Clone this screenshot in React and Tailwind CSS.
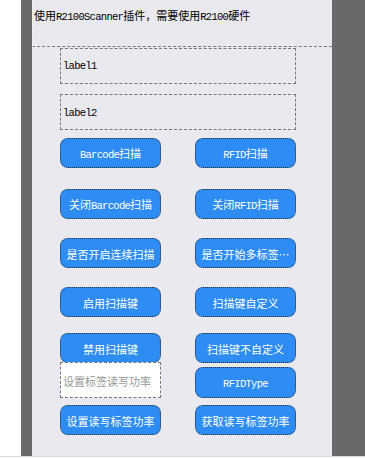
import React from "react";

function T({ text }) {
  const parts = text.match(/[\x20-\x7e]+|[^\x20-\x7e]+/g) || [];
  return (
    <span className="whitespace-nowrap">
      {parts.map((p, i) =>
        /^[\x20-\x7e]+$/.test(p) ? (
          <span key={i} className="font-['Liberation_Mono',monospace] text-[10.5px] tracking-[-0.7px]">
            {p}
          </span>
        ) : (
          <span key={i} className="font-['Noto_Sans_CJK_SC',sans-serif] text-[11px]">
            {p}
          </span>
        )
      )}
    </span>
  );
}

function Btn({ label, extra = "h-[30px]" }) {
  return (
    <div
      className={`w-[101px] ${extra} rounded-[8px] border border-dotted border-[#2a2f3a] bg-[#2d8cf5] text-white flex items-center justify-center overflow-hidden whitespace-nowrap leading-[14px]`}
    >
      <T text={label} />
    </div>
  );
}

function Row({ left, right, className }) {
  return (
    <div className={`flex gap-[34px] ${className}`}>
      <Btn label={left} />
      <Btn label={right} />
    </div>
  );
}

export default function App() {
  return (
    <div className="w-[365px] h-[458px] bg-white">
      <div className="flex h-[457px] border-b border-[#dcdcdc]">
        <div className="w-[21px] bg-white" />
        <div className="w-[11px] bg-[#696969]" />
        <div className="w-[300px] bg-[#eae9f0] flex flex-col">
          <div className="h-[47px] border-b border-l border-dashed border-b-[#7a7a7a] border-l-[#f4f4f4] pt-[7px] pl-[1px] text-black leading-[14px] whitespace-nowrap">
            <T text="使用R2100Scanner插件，需要使用R2100硬件" />
          </div>
          <div className="ml-[28px] mt-[1px] w-[236px] h-[36px] border border-dashed border-[#777] flex items-center pl-[2px] pb-[4px] text-black leading-[14px]">
            <T text="label1" />
          </div>
          <div className="ml-[28px] mt-[10px] w-[236px] h-[36px] border border-dashed border-[#777] flex items-center pl-[2px] pb-[2px] text-black leading-[14px]">
            <T text="label2" />
          </div>
          <div className="ml-[28px] flex flex-col">
            <Row left="Barcode扫描" right="RFID扫描" className="mt-[8px]" />
            <Row left="关闭Barcode扫描" right="关闭RFID扫描" className="mt-[21px]" />
            <Row left="是否开启连续扫描" right="是否开始多标签…" className="mt-[19px]" />
            <Row left="启用扫描键" right="扫描键自定义" className="mt-[19px]" />
            <Row left="禁用扫描键" right="扫描键不自定义" className="mt-[16px]" />
            <div className="flex gap-[34px] items-end h-[36px] mt-[-1px]">
              <div className="w-[101px] h-[36px] bg-white border border-dashed border-[#777] flex items-center pl-[2px] text-[#9a9a9a] leading-[14px] whitespace-nowrap">
                <T text="设置标签读写功率" />
              </div>
              <Btn label="RFIDType" extra="h-[31px]" />
            </div>
            <Row left="设置读写标签功率" right="获取读写标签功率" className="mt-[7px]" />
          </div>
        </div>
        <div className="flex-1 bg-[#696969]" />
      </div>
    </div>
  );
}
